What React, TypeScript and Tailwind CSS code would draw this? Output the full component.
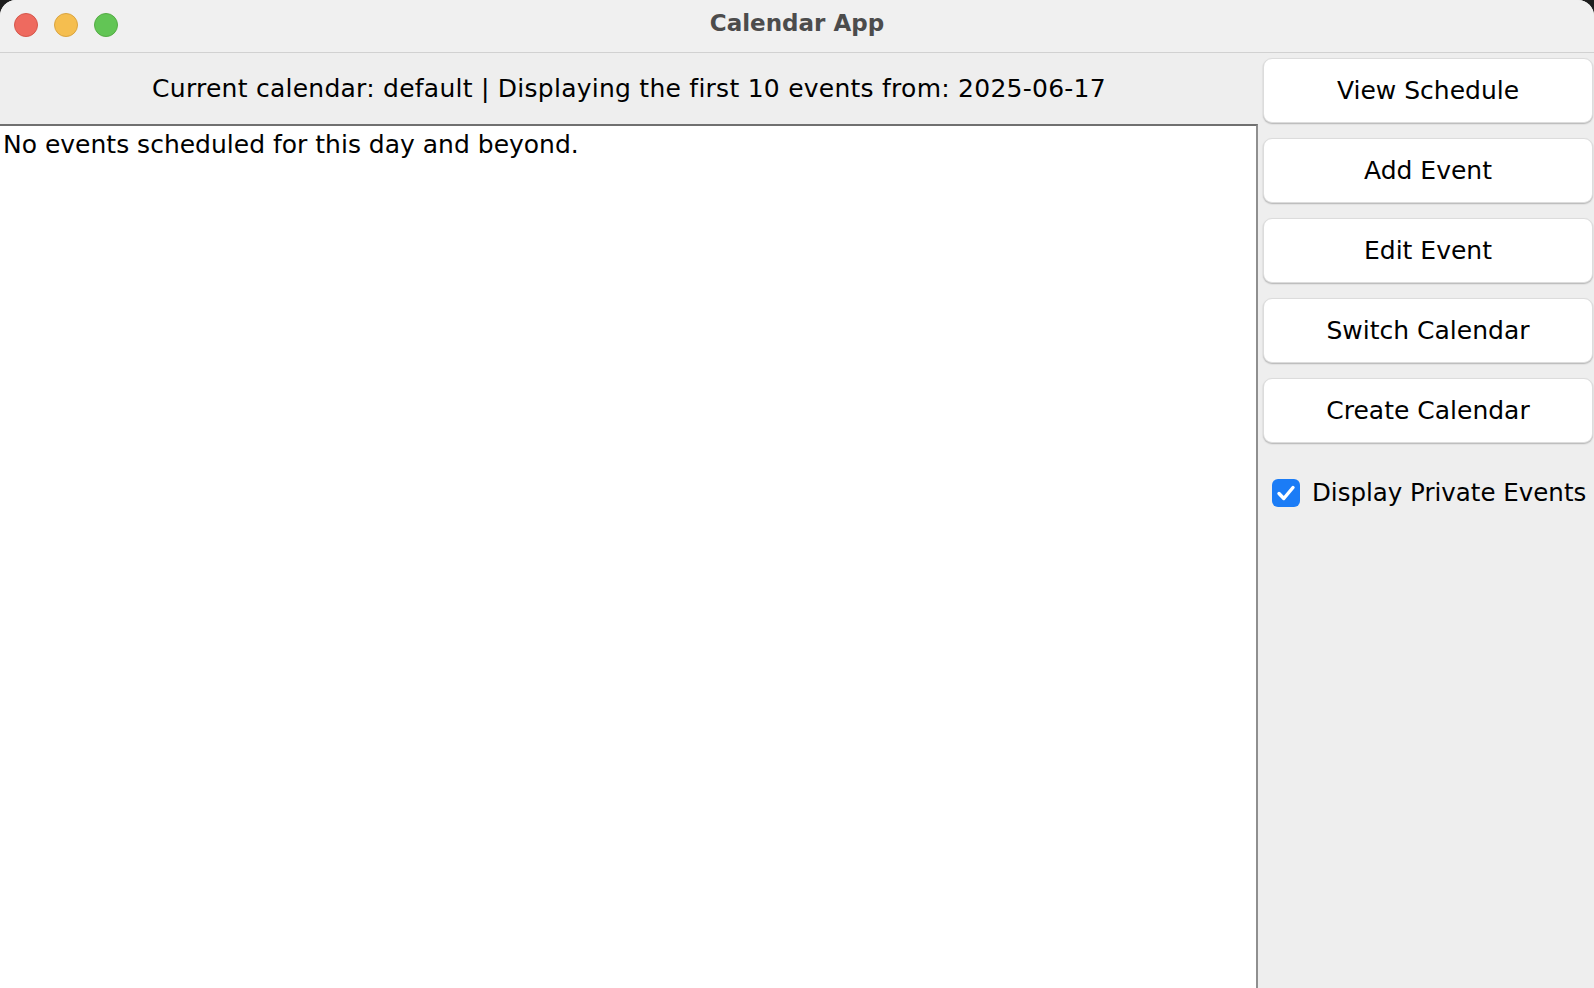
import * as React from 'react';

const FONT = { fontFamily: '"DejaVu Sans", "Liberation Sans", sans-serif' };

const BUTTONS = ['View Schedule', 'Add Event', 'Edit Event', 'Switch Calendar', 'Create Calendar'];

const TrafficLights: React.FC = () => (
    <div className="flex items-center gap-[16px] pl-[14px] -mt-[3px]">
        <span className="w-[24px] h-[24px] rounded-full bg-[#ee6a5f] border border-[#d4574b]" />
        <span className="w-[24px] h-[24px] rounded-full bg-[#f5be4f] border border-[#d9a440]" />
        <span className="w-[24px] h-[24px] rounded-full bg-[#62c555] border border-[#55ab45]" />
    </div>
);

const App: React.FC = () => {
    const [showPrivate, setShowPrivate] = React.useState(true);

    return (
        <div className="w-[1594px] h-[988px] bg-[#1e1e1e] overflow-hidden" style={FONT}>
            <div className="h-full rounded-t-[16px] overflow-hidden bg-[#eeeeee] flex flex-col">
                {/* title bar */}
                <div className="relative h-[53px] shrink-0 bg-[#f0f0f0] border-b border-[#d1d1d1] flex items-center">
                    <TrafficLights />
                    <div className="absolute inset-0 pb-[5px] flex items-center justify-center text-[23px] font-bold text-[#4c4c4c]">
                        Calendar App
                    </div>
                </div>

                <div className="flex flex-1 min-h-0">
                    <div className="w-[1258px] flex flex-col">
                        <div className="h-[71px] shrink-0 flex items-center justify-center text-[25px] tracking-[0.25px] text-black">
                            Current calendar: default | Displaying the first 10 events from: 2025-06-17
                        </div>
                        <div className="flex-1 bg-white border-t-2 border-r-2 border-t-[#707070] border-r-[#8f8f8f] pl-[3px] pt-[2px] text-[25px] leading-[34px] text-black">
                            No events scheduled for this day and beyond.
                        </div>
                    </div>

                    <div className="flex-1 flex flex-col pt-[5px] pl-[5px] pr-[1px]">
                        <div className="flex flex-col gap-[15px]">
                            {BUTTONS.map(label => (
                                <button
                                    key={label}
                                    className="h-[65px] rounded-[9px] bg-white border border-[#dcdcdc] shadow-[0_1px_1.5px_rgba(0,0,0,0.25)] text-[25px] text-black"
                                >
                                    {label}
                                </button>
                            ))}
                        </div>
                        <label className="flex items-center gap-[12px] mt-[32px] pl-[9px] text-[24.5px] text-black cursor-pointer">
                            <span
                                onClick={() => setShowPrivate(v => !v)}
                                className={`w-[28px] h-[28px] rounded-[6px] flex items-center justify-center ${showPrivate ? 'bg-[#1b7cf6]' : 'bg-white border border-[#b0b0b0]'}`}
                            >
                                {showPrivate && (
                                    <svg width="24" height="24" viewBox="0 0 24 24" fill="none">
                                        <path d="M5 12.5 L9.8 17.5 L19 6.5" stroke="white" strokeWidth="3.4" strokeLinecap="round" strokeLinejoin="round" />
                                    </svg>
                                )}
                            </span>
                            <span>Display Private Events</span>
                        </label>
                    </div>
                </div>
            </div>
        </div>
    );
};

export default App;
